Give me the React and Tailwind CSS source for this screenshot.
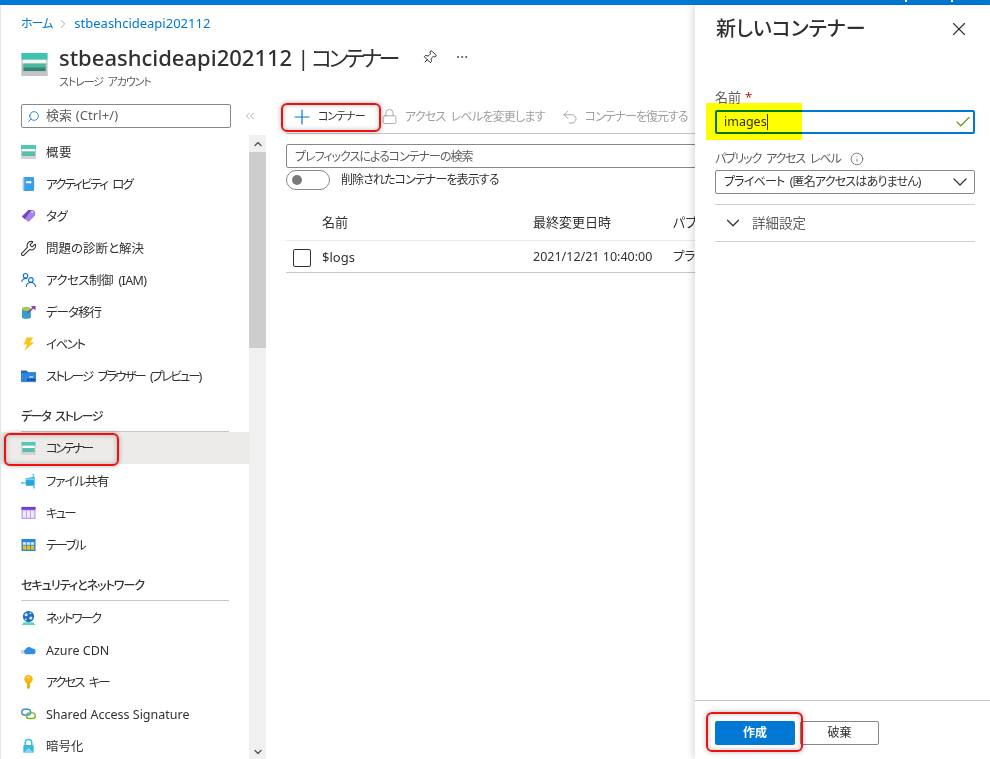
import { ChevronDown, ChevronRight, ChevronUp, ChevronsLeft, Search, Plus, Lock, Undo2, Pin, Ellipsis, X, Check, Info, Wrench } from 'lucide-react';

const FONT = "font-['Noto_Sans','Noto_Sans_CJK_JP',sans-serif] [font-feature-settings:'palt']";

function StorageIcon({ className }) {
  return (
    <svg viewBox="0 0 27 24" className={className}>
      <rect x="0" y="0" width="27" height="24" rx="1" fill="#b4b4b4" />
      <rect x="0" y="0" width="27" height="7" fill="#3cc4ae" />
      <rect x="1" y="7" width="25" height="4" fill="#f4f4f4" />
      <rect x="2" y="11" width="23" height="4" fill="#4bb8a4" />
      <rect x="2" y="15" width="23" height="4" fill="#2f8578" />
      <rect x="0" y="19" width="27" height="5" fill="#c4c4c4" />
    </svg>
  );
}

function SmallStorageIcon({ className }) {
  return (
    <svg viewBox="0 0 15 14" className={className}>
      <rect x="0" y="0" width="15" height="14" fill="#c8c8c8" />
      <rect x="0" y="0" width="15" height="4" fill="#4ccab4" />
      <rect x="1" y="4" width="13" height="2.5" fill="#fafafa" />
      <rect x="1" y="6.5" width="13" height="4.5" fill="#58bfae" />
      <rect x="0" y="11" width="15" height="3" fill="#d4d4d4" />
    </svg>
  );
}

function LogIcon() {
  return (
    <svg viewBox="0 0 16 16" className="h-4 w-4">
      <rect x="2" y="0.5" width="12" height="15" rx="1.5" fill="#3b9fe8" />
      <rect x="2" y="0.5" width="1.5" height="15" fill="#9bd0f5" />
      <rect x="5.5" y="5" width="5.5" height="2.2" fill="#fff" />
    </svg>
  );
}

function TagIcon() {
  return (
    <svg viewBox="0 0 16 16" className="h-4 w-4">
      <path d="M1 8.5 L8 1.5 H13 L15 3.5 V7.5 L8 14.5 Z" fill="#a583e8" />
      <path d="M1 8.5 L8 1.5 H11 L4 11.5 Z" fill="#7446bc" />
      <circle cx="12" cy="4" r="1" fill="#e4d8fa" />
    </svg>
  );
}

function PeopleIcon() {
  return (
    <svg viewBox="0 0 16 16" className="h-4 w-4" fill="none" stroke="#0f6fd0" strokeWidth="1.2">
      <circle cx="4.8" cy="3.4" r="2.4" />
      <path d="M0.8 10 A4.2 4.2 0 0 1 6.5 6.6" />
      <circle cx="10.5" cy="8" r="2.5" />
      <path d="M5.5 15.5 A5 5 0 0 1 15.5 15.5" />
    </svg>
  );
}

function MigrateIcon() {
  return (
    <svg viewBox="0 0 16 16" className="h-4 w-4">
      <path d="M1 4.5 H10.5 V14 Q5.5 16.5 1 14 Z" fill="#3a9cc4" />
      <ellipse cx="5.7" cy="4.5" rx="4.7" ry="2.2" fill="#a4cc4a" />
      <path d="M7 9 L14 2.5" stroke="#8a3fc2" strokeWidth="1.6" />
      <path d="M10.5 1.5 H15.5 V6.5 Z" fill="#8a3fc2" />
    </svg>
  );
}

function BoltIcon() {
  return (
    <svg viewBox="0 0 16 16" className="h-4 w-4">
      <path d="M6 1 H13 L9.5 6 H14 L3.5 15.5 L6.5 8.5 H3 Z" fill="#fcc419" />
    </svg>
  );
}

function ExplorerIcon() {
  return (
    <svg viewBox="0 0 16 16" className="h-4 w-4">
      <path d="M0 2 H6 L7.5 4 H16 V14.5 H0 Z" fill="#1a6cc4" />
      <rect x="0" y="5" width="16" height="9.5" fill="#2f86dc" />
      <rect x="9" y="8" width="4" height="2" fill="#9cc6f0" />
      <rect x="6.5" y="11" width="2.5" height="2" fill="#0f3f7a" />
      <rect x="10" y="11" width="2.5" height="2" fill="#0f3f7a" />
      <rect x="13" y="11" width="2" height="2" fill="#0f3f7a" />
    </svg>
  );
}

function FileShareIcon() {
  return (
    <svg viewBox="0 0 16 16" className="h-4 w-4">
      <path d="M5 5 L14.5 3.5 V13 H5 Z" fill="#2ba4dc" />
      <rect x="5" y="5" width="9.5" height="2" fill="#6fd0f0" />
      <path d="M1 10 H5 M13 3.5 V1.5 M14 13 V15" stroke="#50c8f0" strokeWidth="1.2" />
      <circle cx="1.3" cy="10" r="1.2" fill="#50c8f0" />
      <circle cx="13.3" cy="1.3" r="1" fill="#50c8f0" />
      <circle cx="14" cy="15" r="1" fill="#50c8f0" />
    </svg>
  );
}

function QueueIcon() {
  return (
    <svg viewBox="0 0 16 16" className="h-4 w-4">
      <rect x="0.5" y="1.5" width="15" height="13" rx="0.5" fill="#bfa4f2" />
      <rect x="0.5" y="1.5" width="15" height="3" fill="#6d3fd0" />
      <rect x="2" y="5.5" width="3.3" height="7.5" fill="#f0eafc" />
      <rect x="6.3" y="5.5" width="3.3" height="7.5" fill="#f0eafc" />
      <rect x="10.7" y="5.5" width="3.3" height="7.5" fill="#f0eafc" />
    </svg>
  );
}

function TableIcon() {
  return (
    <svg viewBox="0 0 16 16" className="h-4 w-4">
      <rect x="0.5" y="1.5" width="15" height="13" rx="0.5" fill="#2a86dc" />
      <rect x="2" y="5" width="3.5" height="2.8" fill="#d4e8fa" />
      <rect x="6.2" y="5" width="3.5" height="2.8" fill="#d4e8fa" />
      <rect x="10.5" y="5" width="3.5" height="2.8" fill="#d4e8fa" />
      <rect x="2" y="8.6" width="3.5" height="4.4" fill="#e8c020" />
      <rect x="6.2" y="8.6" width="3.5" height="4.4" fill="#e8c020" />
      <rect x="10.5" y="8.6" width="3.5" height="4.4" fill="#e8c020" />
    </svg>
  );
}

function NetworkIcon() {
  return (
    <svg viewBox="0 0 16 16" className="h-4 w-4">
      <path d="M0.5 15.5 L3 12.5 H13 L15.5 15.5 Z" fill="#5fd6b8" />
      <circle cx="8" cy="6.5" r="6" fill="#1f6fc8" />
      <circle cx="5.5" cy="4.5" r="1.7" fill="#d8ebfb" />
      <circle cx="10.5" cy="8" r="1.7" fill="#d8ebfb" />
      <circle cx="10" cy="3" r="1" fill="#d8ebfb" />
      <circle cx="5" cy="9.5" r="1" fill="#d8ebfb" />
    </svg>
  );
}

function CdnIcon() {
  return (
    <svg viewBox="0 0 16 16" className="h-4 w-4">
      <path d="M5 12.5 A3 3 0 0 1 5 7 A4.2 4.2 0 0 1 12 6.5 A3 3 0 0 1 13 12.5 Z" fill="#2f8fe8" />
      <path d="M0 9 H3.5 M0 11 H3" stroke="#a8a8a8" strokeWidth="1" />
    </svg>
  );
}

function KeyIcon() {
  return (
    <svg viewBox="0 0 16 16" className="h-4 w-4">
      <circle cx="8" cy="5" r="4.5" fill="#fcb814" />
      <path d="M6.5 8 H9.5 V14 L8 15.8 L6.5 14 Z" fill="#f5a50a" />
      <circle cx="8" cy="3.2" r="1" fill="#fff3c4" />
    </svg>
  );
}

function LinkIcon() {
  return (
    <svg viewBox="0 0 16 16" className="h-4 w-4" fill="none" strokeWidth="1.5">
      <rect x="0.8" y="3" width="9.5" height="6" rx="3" stroke="#3b8fd8" />
      <rect x="5.7" y="6.8" width="9.5" height="6" rx="3" stroke="#76b82a" />
    </svg>
  );
}

function LockColorIcon() {
  return (
    <svg viewBox="0 0 16 16" className="h-4 w-4">
      <path d="M4.5 7 V4.5 A3.5 3.5 0 0 1 11.5 4.5 V7" fill="none" stroke="#3cc0e8" strokeWidth="1.6" />
      <rect x="2.5" y="7" width="11" height="8.5" rx="1" fill="#38b8dc" />
      <path d="M2.5 15.5 L8 10 L13.5 15.5 Z" fill="#7fdcf0" />
    </svg>
  );
}

// tracking per label: the kana in the shot is much narrower than Noto's
const topItems = [
  { label: '概要', icon: <SmallStorageIcon className="h-[14px] w-[15px]" />, fit: 'tracking-[0.5px]' },
  { label: 'アクティビティ ログ', icon: <LogIcon />, fit: 'tracking-[-1.9px] [word-spacing:4px]' },
  { label: 'タグ', icon: <TagIcon />, fit: 'tracking-[-0.5px]' },
  { label: '問題の診断と解決', icon: <Wrench className="h-[17px] w-[17px] shrink-0 text-[#323130]" strokeWidth={1.5} />, fit: '' },
  { label: 'アクセス制御 (IAM)', icon: <PeopleIcon />, fit: 'tracking-[-0.6px] [word-spacing:3px]' },
  { label: 'データ移行', icon: <MigrateIcon />, fit: 'tracking-[-1px]' },
  { label: 'イベント', icon: <BoltIcon />, fit: 'tracking-[-1.5px]' },
  { label: 'ストレージ ブラウザー (プレビュー)', icon: <ExplorerIcon />, fit: 'tracking-[-2px] [word-spacing:4px]' },
];

const storageItems = [
  { label: 'ファイル共有', icon: <FileShareIcon />, fit: 'tracking-[-1px]' },
  { label: 'キュー', icon: <QueueIcon />, fit: 'tracking-[-2px]' },
  { label: 'テーブル', icon: <TableIcon />, fit: 'tracking-[-1.7px]' },
];

const securityItems = [
  { label: 'ネットワーク', icon: <NetworkIcon />, fit: 'tracking-[-2px]' },
  { label: 'Azure CDN', icon: <CdnIcon />, fit: '' },
  { label: 'アクセス キー', icon: <KeyIcon />, fit: 'tracking-[-2px] [word-spacing:4px]' },
  { label: 'Shared Access Signature', icon: <LinkIcon />, fit: '' },
  { label: '暗号化', icon: <LockColorIcon />, fit: '' },
];

function NavItem({ label, icon, active, fit }) {
  return (
    <div className={`flex h-8 items-center gap-[10px] pl-[21px] text-[12.5px] text-[#323130] ${active ? 'bg-[#edebe9]' : ''}`}>
      <span className="flex w-[15px] justify-center">{icon}</span>
      <span className={`whitespace-nowrap pt-[2px] ${fit}`}>{label}</span>
    </div>
  );
}

function NavHeading({ children, fit }) {
  return (
    <div className={`mx-[21px] flex h-10 w-[208px] items-end border-b border-[#c8c6c4] pb-[6px] text-xs font-medium text-[#323130] ${fit}`}>
      {children}
    </div>
  );
}

function Sidebar() {
  return (
    <aside className="flex h-full w-[266px] shrink-0 flex-col">
      <div className="flex h-[35px] shrink-0 items-start">
        <div className="ml-[21px] mt-[4px] flex h-6 w-[210px] items-center gap-[6px] rounded-[2px] border border-[#8a8886] pl-[5px] text-[13px] tracking-[0.1px] text-[#605e5c]">
          <Search className="h-[13px] w-[13px] -scale-x-100 text-[#0078d4]" strokeWidth={1.5} />
          <span>検索 (Ctrl+/)</span>
        </div>
        <ChevronsLeft className="ml-[12px] mt-[9px] h-[14px] w-[14px] text-[#8a8886]" strokeWidth={1.2} />
      </div>
      <div className="flex min-h-0 flex-1">
        <nav className="w-[249px] overflow-hidden pt-px">
          {topItems.map((item) => <NavItem key={item.label} {...item} />)}
          <NavHeading fit="tracking-[-1.4px] [word-spacing:3px]">データ ストレージ</NavHeading>
          <NavItem label="コンテナー" icon={<SmallStorageIcon className="h-[13px] w-[15px]" />} fit="tracking-[-2.6px]" active />
          <div className="h-px" />
          {storageItems.map((item) => <NavItem key={item.label} {...item} />)}
          <NavHeading fit="tracking-[-1px]">セキュリティとネットワーク</NavHeading>
          <div className="h-px" />
          {securityItems.map((item) => <NavItem key={item.label} {...item} />)}
        </nav>
        <div className="flex w-[17px] flex-col bg-[#f0f0f0]">
          <div className="flex h-[17px] items-center justify-center">
            <ChevronUp className="h-3 w-3 text-[#606060]" strokeWidth={3} />
          </div>
          <div className="h-[196px] bg-[#cdcdcd]" />
          <div className="flex flex-1 items-end justify-center pb-[1px]">
            <ChevronDown className="h-3 w-3 text-[#606060]" strokeWidth={3} />
          </div>
        </div>
      </div>
    </aside>
  );
}

function MainContent() {
  return (
    <main className="min-w-0 flex-1 pl-5 text-xs text-[#323130]">
      <div className="flex h-[34px] items-center border-b border-[#c8c6c4]">
        <div className="flex w-[95px] shrink-0 items-center">
          <Plus className="ml-[4px] h-6 w-6 text-[#0078d4]" strokeWidth={1.2} />
          <span className="ml-[4px] text-[11px] tracking-[-1px]">コンテナー</span>
        </div>
        <Lock className="h-[17px] w-[17px] text-[#a19f9d]" strokeWidth={1.2} />
        <span className="ml-[7px] whitespace-nowrap tracking-[-0.8px] text-[#a19f9d] [word-spacing:3px]">アクセス レベルを変更します</span>
        <Undo2 className="ml-[16px] h-[18px] w-[18px] text-[#a19f9d]" strokeWidth={1.2} />
        <span className="ml-[6px] whitespace-nowrap tracking-[-1px] text-[#a19f9d]">コンテナーを復元する</span>
      </div>
      <div className="mt-[10px] flex h-6 items-center rounded-[2px] border border-[#8a8886] pl-2 pt-px tracking-[-1px] text-[#605e5c]">
        プレフィックスによるコンテナーの検索
      </div>
      <div className="mt-[2px] flex h-5 items-center">
        <div className="flex h-5 w-[44px] items-center rounded-full border border-[#8a8886] pl-[5px]">
          <div className="h-[10px] w-[10px] rounded-full bg-[#7a7a7a]" />
        </div>
        <span className="ml-[11px] tracking-[-0.9px]">削除されたコンテナーを表示する</span>
      </div>
      <div className="mt-[22px] flex h-[29px] items-center border-b border-[#edebe9] pb-[6px] text-[13px]">
        <span className="ml-[36px] w-[211px]">名前</span>
        <span className="w-[140px]">最終変更日時</span>
        <span className="whitespace-nowrap">パブリック</span>
      </div>
      <div className="flex h-[32px] items-center border-b border-[#c8c6c4] pt-[2px] text-[12.5px]">
        <div className="ml-[7px] h-[18px] w-[18px] shrink-0 rounded-[2px] border border-[#323130]" />
        <span className="ml-[11px] w-[211px] text-[13px]">$logs</span>
        <span className="w-[140px]">2021/12/21 10:40:00</span>
        <span className="whitespace-nowrap">プライベート</span>
      </div>
    </main>
  );
}

function NewContainerPanel() {
  return (
    <aside className="absolute bottom-0 right-0 top-[5px] flex w-[295px] flex-col bg-white text-xs text-[#323130] shadow-[-3px_0_6px_rgba(0,0,0,0.12)]">
      <div className="flex h-[48px] items-center justify-between pl-[21px] pr-[20px]">
        <h2 className="text-xl font-medium">新しいコンテナー</h2>
        <X className="h-[22px] w-[22px] text-[#323130]" strokeWidth={1.2} />
      </div>
      <div className="flex-1 pl-5 pr-[15px] pt-[36px]">
        <div className="flex h-[18px] items-center gap-1 text-[13px] text-[#605e5c]">
          名前 <span className="text-[#a4262c]">*</span>
        </div>
        <div className="mt-[3px] flex h-6 items-center justify-between rounded-[2px] border-2 border-[#0078d4] pl-[7px] pr-px text-[12.5px]">
          <span className="border-r border-[#323130] leading-[16px]">images</span>
          <Check className="h-[18px] w-[18px] text-[#5ea400]" strokeWidth={1.6} />
        </div>
        <div className="mt-[16px] flex h-[18px] items-center tracking-[-1.15px] text-[#605e5c] [word-spacing:3px]">
          パブリック アクセス レベル
          <Info className="ml-[9px] h-[14px] w-[14px] text-[#605e5c]" strokeWidth={1.3} />
        </div>
        <div className="mt-[2px] flex h-6 items-center justify-between rounded-[2px] border border-[#8a8886] pl-2 pr-[2px]">
          <span className="tracking-[-0.8px] [word-spacing:3px]">プライベート (匿名アクセスはありません)</span>
          <ChevronDown className="h-6 w-6 text-[#323130]" strokeWidth={1.2} />
        </div>
        <div className="mt-[10px] flex h-[38px] items-center border-y border-[#d2d0ce] pl-[7px]">
          <ChevronDown className="h-[22px] w-[22px] text-[#323130]" strokeWidth={1.3} />
          <span className="ml-[8px] text-[13.5px] text-[#605e5c]">詳細設定</span>
        </div>
      </div>
      <div className="flex h-[59px] shrink-0 gap-[5px] border-t border-[#c8c6c4] pl-5 pt-[20px]">
        <button type="button" className="h-6 w-[80px] rounded-[2px] bg-[#0078d4] text-xs font-bold text-white">作成</button>
        <button type="button" className="h-6 w-[79px] rounded-[2px] border border-[#8a8886] bg-white text-xs text-[#323130]">破棄</button>
      </div>
    </aside>
  );
}

function RedMark({ className }) {
  return <div className={`absolute rounded-[6px] border-2 border-[#f01010] shadow-[0_0_5px_rgba(0,0,0,0.3),inset_0_0_5px_rgba(0,0,0,0.25)] ${className}`} />;
}

export default function App() {
  return (
    <div className={`relative flex h-[759px] w-[990px] flex-col overflow-hidden bg-white ${FONT}`}>
      <div className="h-[5px] shrink-0 bg-[#0078d4]" />
      <div className="flex h-[36px] shrink-0 items-center pl-[21px] pt-[1px] text-[13px] text-[#0078d4]">
        <span className="text-xs tracking-[-1px]">ホーム</span>
        <ChevronRight className="mx-[4px] h-[14px] w-[14px] text-[#8a8886]" strokeWidth={1.2} />
        <span>stbeashcideapi202112</span>
      </div>
      <div className="flex h-[59px] shrink-0 items-start pl-[21px]">
        <StorageIcon className="mt-[12px] h-[23px] w-[27px]" />
        <div className="ml-[11px]">
          <div className="flex h-[32px] items-center">
            <h1 className="flex whitespace-nowrap text-[22px] text-[#323130]">
              <span className="font-medium">stbeashcideapi202112</span>
              <span className="ml-[5px]">|</span>
              <span className="ml-[2px] tracking-[-3.5px]">コンテナー</span>
            </h1>
            <Pin className="ml-[25px] h-[15px] w-[15px] rotate-45 text-[#201f1e]" strokeWidth={1.5} />
            <Ellipsis className="ml-[18px] h-[14px] w-[14px] text-[#323130]" strokeWidth={1.3} />
          </div>
          <div className="mt-px text-[11px] tracking-[-1.1px] text-[#605e5c] [word-spacing:3px]">ストレージ アカウント</div>
        </div>
      </div>
      <div className="flex min-h-0 flex-1">
        <Sidebar />
        <MainContent />
      </div>
      <NewContainerPanel />
      <div className="absolute left-0 top-[5px] h-[754px] w-px bg-[#e4e4e4]" />
      <div className="absolute left-[905px] top-0 h-[2px] w-[2px] bg-white" />
      <div className="absolute left-[951px] top-0 h-[2px] w-[2px] bg-white" />
      <RedMark className="left-[281px] top-[103px] h-[29px] w-[100px]" />
      <RedMark className="left-[4px] top-[433px] h-[33px] w-[115px]" />
      <RedMark className="left-[706px] top-[712px] h-[40px] w-[97px]" />
      <div className="absolute left-[706px] top-[103px] h-[37px] w-[96px] bg-[#ffff00] mix-blend-multiply" />
    </div>
  );
}
